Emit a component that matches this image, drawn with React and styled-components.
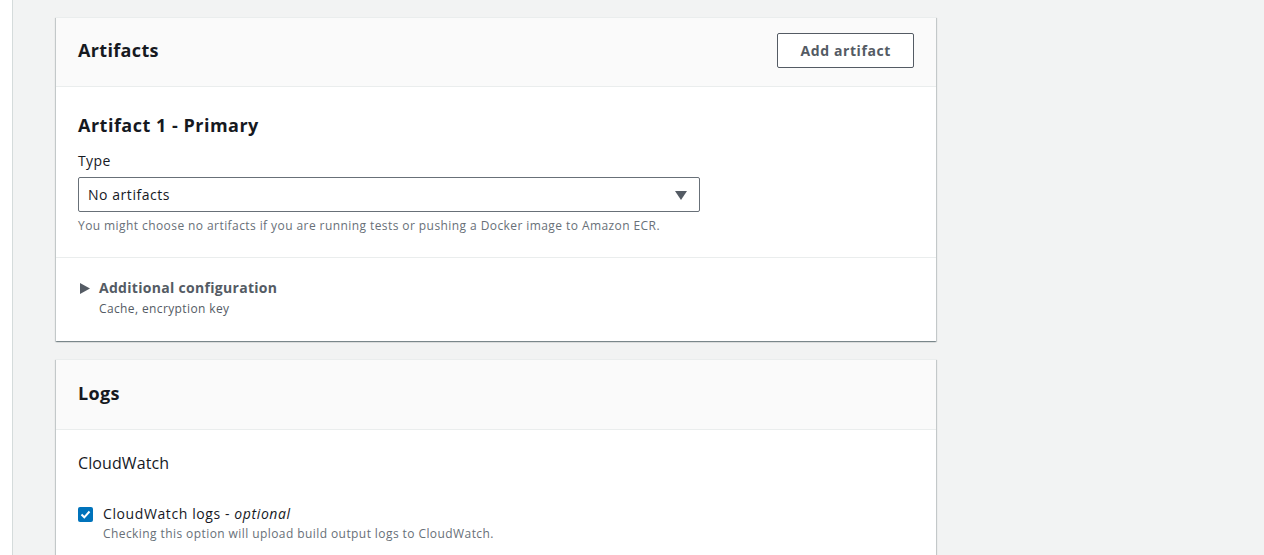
import React from 'react';
import styled, { createGlobalStyle } from 'styled-components';

const Global = createGlobalStyle`
  html, body {
    margin: 0;
    padding: 0;
    background: #f2f3f3;
    font-family: 'Open Sans', 'Noto Sans', Arial, sans-serif;
    color: #16191f;
    overflow: hidden;
  }
  * { box-sizing: border-box; }
`;

const Shell = styled.div`
  display: flex;
  height: 555px;
`;

const Rail = styled.div`
  width: 13px;
  flex: none;
  background: #fff;
  border-right: 1px solid #d5dbdb;
`;

const Content = styled.main`
  display: flex;
  flex-direction: column;
  gap: 18px;
  padding: 17px 0 0 43px;
  width: 923px;
  flex: none;
`;

const Card = styled.section`
  background: #fff;
  box-shadow: 0 1px 1px 0 rgba(0, 28, 36, 0.3), 1px 1px 1px 0 rgba(0, 28, 36, 0.15),
    -1px 1px 1px 0 rgba(0, 28, 36, 0.15);
  border-top: 1px solid #eaeded;
`;

const Header = styled.header`
  display: flex;
  align-items: center;
  justify-content: space-between;
  height: ${(p) => p.$h || 69}px;
  padding: 0 22px 4px;
  background: #fafafa;
  border-bottom: 1px solid #eaeded;
`;

const Title = styled.h2`
  margin: 0;
  font-size: 18px;
  font-weight: 700;
  line-height: 22px;
  letter-spacing: 0.35px;
  color: #16191f;
`;

const Button = styled.button`
  height: 35px;
  padding: 0 22px;
  background: #fff;
  border: 1px solid #545b64;
  border-radius: 2px;
  font-family: inherit;
  font-size: 14px;
  font-weight: 700;
  letter-spacing: 0.6px;
  color: #545b64;
`;

const Body = styled.div`
  padding: ${(p) => p.$pad || '22px'};
  border-bottom: ${(p) => (p.$divider ? '1px solid #eaeded' : 'none')};
`;

const SubTitle = styled.h3`
  margin: 0 0 9px;
  font-size: 18px;
  font-weight: 700;
  line-height: 34px;
  letter-spacing: 0.5px;
`;

const Label = styled.div`
  font-size: 14px;
  line-height: 20px;
  letter-spacing: 0.4px;
  margin-bottom: 6px;
`;

const Select = styled.div`
  display: flex;
  align-items: center;
  justify-content: space-between;
  width: 622px;
  height: 35px;
  padding: 0 12px 0 9px;
  border: 1px solid #687078;
  border-radius: 2px;
  font-size: 14px;
  letter-spacing: 0.55px;
`;

const Hint = styled.div`
  margin-top: ${(p) => p.$top ?? 6}px;
  font-size: 12px;
  line-height: 16px;
  letter-spacing: 0.42px;
  color: #687078;
`;

const Expander = styled.div`
  display: flex;
  gap: 9px;
  padding-left: 2px;
`;

const ExpTitle = styled.div`
  font-size: 14px;
  font-weight: 700;
  line-height: 18px;
  letter-spacing: 0.3px;
  color: #545b64;
`;

const ExpSub = styled.div`
  margin-top: 4px;
  font-size: 12px;
  line-height: 16px;
  letter-spacing: 0.38px;
  color: #545b64;
`;

const Section = styled.div`
  font-size: 16px;
  line-height: 22px;
  letter-spacing: 0.1px;
  margin-bottom: 30px;
`;

const CheckRow = styled.div`
  display: flex;
  gap: 10px;
`;

const Box = styled.span`
  width: 15px;
  height: 15px;
  margin-top: 3px;
  flex: none;
  background: #0073bb;
  border-radius: 2px;
  display: flex;
  align-items: center;
  justify-content: center;
`;

const CheckLabel = styled.div`
  font-size: 14px;
  line-height: 20px;
  letter-spacing: 0.6px;
  em {
    font-style: italic;
  }
`;

const Triangle = () => (
  <svg width="10" height="11" viewBox="0 0 10 11" style={{ marginTop: 4, flex: 'none' }}>
    <polygon points="0,0 10,5.5 0,11" fill="#545b64" />
  </svg>
);

const Caret = () => (
  <svg width="12" height="10" viewBox="0 0 12 10">
    <polygon points="0,1 12,1 6,10" fill="#545b64" />
  </svg>
);

export default function App() {
  return (
    <>
      <Global />
      <Shell>
        <Rail />
        <Content>
          <Card>
            <Header>
              <Title>Artifacts</Title>
              <Button>Add artifact</Button>
            </Header>
            <Body $divider $pad="21px 22px 23px">
              <SubTitle>Artifact 1 - Primary</SubTitle>
              <Label>Type</Label>
              <Select>
                <span>No artifacts</span>
                <Caret />
              </Select>
              <Hint>You might choose no artifacts if you are running tests or pushing a Docker image to Amazon ECR.</Hint>
            </Body>
            <Body $pad="21px 22px 24px">
              <Expander>
                <Triangle />
                <div>
                  <ExpTitle>Additional configuration</ExpTitle>
                  <ExpSub>Cache, encryption key</ExpSub>
                </div>
              </Expander>
            </Body>
          </Card>
          <Card>
            <Header $h={70}>
              <Title>Logs</Title>
            </Header>
            <Body $pad="22px 22px">
              <Section>CloudWatch</Section>
              <CheckRow>
                <Box>
                  <svg width="11" height="11" viewBox="0 0 11 11">
                    <polyline points="1.5,5.5 4.3,8.3 9.5,2.5" fill="none" stroke="#fff" strokeWidth="2" />
                  </svg>
                </Box>
                <div>
                  <CheckLabel>
                    CloudWatch logs - <em>optional</em>
                  </CheckLabel>
                  <Hint $top={2}>Checking this option will upload build output logs to CloudWatch.</Hint>
                </div>
              </CheckRow>
            </Body>
          </Card>
        </Content>
      </Shell>
    </>
  );
}
